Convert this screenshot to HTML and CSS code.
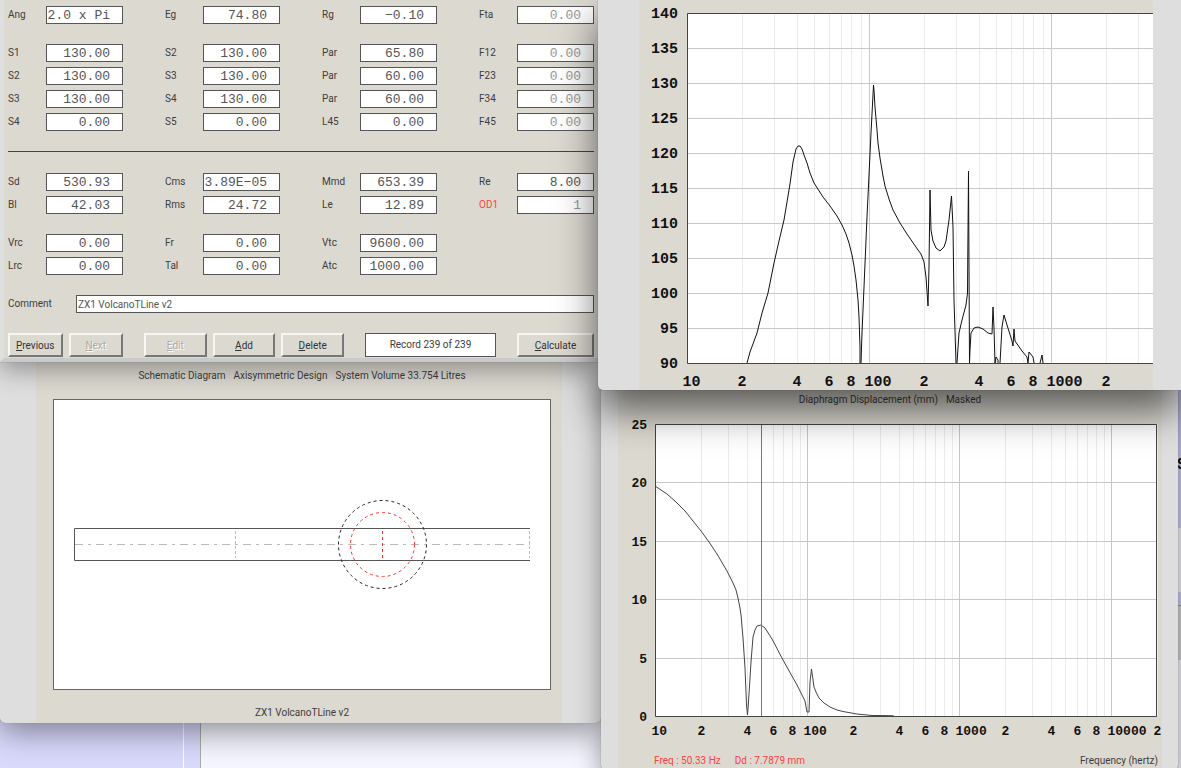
FILE: index.html
```html
<!DOCTYPE html>
<html lang="en">
<head>
    <meta charset="UTF-8">
    <meta name="viewport" content="width=device-width, initial-scale=1.0">
    <title>ZX1 VolcanoTLine v2</title>
    <link rel="stylesheet" href="styles.css">
</head>
<body>
    <div class="desktop">
        <!-- Web page behind the windows -->
        <div class="backdrop">
            <div class="backdrop-nav"></div>
            <div class="backdrop-gutter"></div>
            <div class="backdrop-page"></div>
            <div class="backdrop-side">
                <div class="side-block side-heading">S</div>
                <div class="side-block side-light"></div>
                <div class="side-block side-bar"></div>
                <div class="side-block side-grey"></div>
                <div class="side-block side-rest"></div>
            </div>
        </div>

        <!-- Schematic diagram -->
        <section class="window schematic-window">
            <div class="panel schematic-panel">
                <h2 class="caption"><span>Schematic Diagram</span><span>Axisymmetric Design</span><span>System Volume 33.754 Litres</span></h2>
                <svg class="schematic" viewBox="53 399 498 291">
                    <rect class="frame" x="53.5" y="399.5" width="497" height="290"/>
                    <path class="tube" d="M530 528.5H74.5V560.5H530"/>
                    <path class="axis" d="M75 544.5H530"/>
                    <path class="section" d="M235.5 531V558M529.5 531V558"/>
                    <path class="driver" d="M382.5 531V558"/>
                    <circle class="driver" cx="382.5" cy="544.5" r="32"/>
                    <circle class="magnet" cx="382.5" cy="544.5" r="44"/>
                </svg>
                <p class="caption">ZX1 VolcanoTLine v2</p>
            </div>
        </section>

        <!-- Input parameters -->
        <form class="window form-window">
            <div class="field-grid">
                <div class="field"><label for="ang">Ang</label><input id="ang" value="2.0 x Pi"></div>
                <div class="field"><label for="eg">Eg</label><input id="eg" value="74.80"></div>
                <div class="field"><label for="rg">Rg</label><input id="rg" value="−0.10"></div>
                <div class="field"><label for="fta">Fta</label><input id="fta" value="0.00" disabled></div>
            </div>
            <div class="field-grid">
                <div class="field"><label for="s1">S1</label><input id="s1" value="130.00"></div>
                <div class="field"><label for="s2a">S2</label><input id="s2a" value="130.00"></div>
                <div class="field"><label for="par1">Par</label><input id="par1" value="65.80"></div>
                <div class="field"><label for="f12">F12</label><input id="f12" value="0.00" disabled></div>

                <div class="field"><label for="s2">S2</label><input id="s2" value="130.00"></div>
                <div class="field"><label for="s3a">S3</label><input id="s3a" value="130.00"></div>
                <div class="field"><label for="par2">Par</label><input id="par2" value="60.00"></div>
                <div class="field"><label for="f23">F23</label><input id="f23" value="0.00" disabled></div>

                <div class="field"><label for="s3">S3</label><input id="s3" value="130.00"></div>
                <div class="field"><label for="s4a">S4</label><input id="s4a" value="130.00"></div>
                <div class="field"><label for="par3">Par</label><input id="par3" value="60.00"></div>
                <div class="field"><label for="f34">F34</label><input id="f34" value="0.00" disabled></div>

                <div class="field"><label for="s4">S4</label><input id="s4" value="0.00"></div>
                <div class="field"><label for="s5">S5</label><input id="s5" value="0.00"></div>
                <div class="field"><label for="l45">L45</label><input id="l45" value="0.00"></div>
                <div class="field"><label for="f45">F45</label><input id="f45" value="0.00" disabled></div>
            </div>
            <hr class="rule">
            <div class="field-grid">
                <div class="field"><label for="sd">Sd</label><input id="sd" value="530.93"></div>
                <div class="field"><label for="cms">Cms</label><input id="cms" value="3.89E−05"></div>
                <div class="field"><label for="mmd">Mmd</label><input id="mmd" value="653.39"></div>
                <div class="field"><label for="re">Re</label><input id="re" value="8.00"></div>

                <div class="field"><label for="bl">Bl</label><input id="bl" value="42.03"></div>
                <div class="field"><label for="rms">Rms</label><input id="rms" value="24.72"></div>
                <div class="field"><label for="le">Le</label><input id="le" value="12.89"></div>
                <div class="field"><label class="red" for="od1">OD1</label><input id="od1" value="1" disabled></div>
            </div>
            <div class="field-grid">
                <div class="field"><label for="vrc">Vrc</label><input id="vrc" value="0.00"></div>
                <div class="field"><label for="fr">Fr</label><input id="fr" value="0.00"></div>
                <div class="field"><label for="vtc">Vtc</label><input id="vtc" value="9600.00"></div>
                <div></div>

                <div class="field"><label for="lrc">Lrc</label><input id="lrc" value="0.00"></div>
                <div class="field"><label for="tal">Tal</label><input id="tal" value="0.00"></div>
                <div class="field"><label for="atc">Atc</label><input id="atc" value="1000.00"></div>
                <div></div>
            </div>
            <div class="field comment-field">
                <label for="comment">Comment</label>
                <input id="comment" value="ZX1 VolcanoTLine v2">
            </div>
            <div class="toolbar">
                <div class="button-group nav-buttons">
                    <button type="button"><u>P</u>revious</button>
                    <button type="button" disabled><u>N</u>ext</button>
                </div>
                <div class="button-group edit-buttons">
                    <button type="button" disabled><u>E</u>dit</button>
                    <button type="button"><u>A</u>dd</button>
                    <button type="button"><u>D</u>elete</button>
                </div>
                <output class="record">Record 239 of 239</output>
                <div class="button-group calc-buttons">
                    <button type="button"><u>C</u>alculate</button>
                </div>
            </div>
        </form>

        <!-- Diaphragm displacement -->
        <section class="window displacement-window">
            <div class="panel displacement-panel">
                <h2 class="caption"><span>Diaphragm Displacement (mm)</span><span>Masked</span></h2>
                <svg class="chart chart-small" id="displacement" viewBox="618 408 544 344"></svg>
                <div class="chart-footer">
                    <p class="red"><span>Freq : 50.33 Hz</span><span>Dd : 7.7879 mm</span></p>
                    <p>Frequency (hertz)</p>
                </div>
            </div>
        </section>

        <!-- Acoustical power -->
        <section class="window spl-window">
            <div class="panel spl-panel">
                <svg class="chart" id="spl" viewBox="639 0 514 390"></svg>
            </div>
        </section>
    </div>

    <script src="charts.js"></script>
</body>
</html>
```

FILE: styles.css
```css
* {
    margin: 0;
    padding: 0;
    box-sizing: border-box;
}

body {
    font-family: Roboto, 'Liberation Sans', Arial, sans-serif;
    font-size: 10px;
    line-height: 18px;
    color: #3c3c3c;
}

.desktop {
    position: relative;
    min-height: 100vh;
    overflow: hidden;
}

.red {
    color: #ff4040;
}

/* Page behind the windows */
.backdrop {
    display: flex;
    height: 100vh;
    background: #f5f5ff;
}

.backdrop-nav {
    width: 184px;
    background: #d9d9fc;
    border-right: 1px solid #fff;
}

.backdrop-gutter {
    width: 17px;
    background: #d9d9fc;
    border-right: 1px solid #aaa;
}

.backdrop-page {
    flex: 1;
}

.backdrop-side {
    display: flex;
    flex-direction: column;
    width: 4px;
    overflow: hidden;
}

.side-heading {
    height: 528px;
    padding-top: 455px;
    background: #c8c8f4;
    color: #000;
    font-size: 14px;
    font-weight: bold;
}

.side-light {
    height: 64px;
    background: #eeeef6;
}

.side-bar {
    height: 14px;
    background: #c8c8f4;
    border-bottom: 1px solid #999;
}

.side-grey {
    height: 54px;
    background: #cfcfcf;
}

.side-rest {
    flex: 1;
    background: #f0f0fa;
}

/* Windows */
.window {
    position: absolute;
    background: #dedede;
}

.panel {
    background: #dcd9d1;
}

.caption {
    display: flex;
    justify-content: center;
    gap: 8px;
    font-size: 10px;
    font-weight: normal;
}

.form-window {
    top: 0;
    left: 0;
    right: 583px;
    padding: 6px 4px 1px;
    background: #dcd9d1;
    border-left: 4px solid #dedfdf;
    border-bottom: 4px solid #cacaca;
    box-shadow: 0 0 1px #777, 0 8px 24px rgba(0, 0, 0, 0.35);
}

.schematic-window {
    top: 340px;
    left: 0;
    right: 580px;
    padding: 0 39px 0 36px;
    border-radius: 0 0 5px 5px;
    box-shadow: 0 0 1px #666, 0 10px 30px rgba(0, 0, 0, 0.4);
}

.schematic-panel {
    padding: 27px 11px 1px 17px;
}

.displacement-window {
    top: 375px;
    right: 3px;
    width: 577px;
    padding: 0 16px 0 17px;
    border-radius: 0 0 5px 5px;
    box-shadow: 0 0 1px #666, 0 10px 26px rgba(0, 0, 0, 0.4);
}

.displacement-panel {
    padding-top: 16px;
}

.displacement-panel .chart {
    margin-top: -1px;
}

.spl-window {
    top: 0;
    right: 0;
    width: 583px;
    padding: 0 28px 0 41px;
    border-radius: 0 0 0 5px;
    box-shadow: 0 0 1px #444, 0 20px 40px rgba(0, 0, 0, 0.6);
}

/* Parameter form */
.field-grid {
    display: grid;
    grid-template-columns: repeat(4, minmax(0, 1fr));
    gap: 5px 42px;
    margin-bottom: 20px;
}

.field {
    display: flex;
    align-items: center;
}

.field label {
    width: 38px;
}

.field input {
    flex: 1;
    min-width: 0;
    height: 18px;
    padding: 0 12px 0 0;
    border: 1px solid #555;
    background: #fff;
    color: #555;
    font-family: 'Liberation Mono', 'Courier New', monospace;
    font-size: 13px;
    text-align: right;
    outline: none;
}

.field input:disabled {
    color: #999;
}

.rule {
    margin-bottom: 21px;
    border: 0;
    border-top: 1px solid #444;
}

.field.comment-field {
    margin-bottom: 20px;
}

.comment-field label {
    width: 68px;
}

.field.comment-field input {
    padding: 0 1px;
    font-family: inherit;
    font-size: 10px;
    text-align: left;
}

.toolbar {
    display: flex;
    gap: 21px;
}

.button-group {
    display: flex;
    gap: 6px;
}

.nav-buttons {
    width: 115px;
}

.edit-buttons {
    width: 200px;
}

.calc-buttons {
    width: 77px;
}

.button-group button {
    flex: 1 1 0;
    height: 24px;
    background: #dcd9d1;
    border: 2px solid;
    border-color: #f6f6f4 #777 #777 #f6f6f4;
    color: #333;
    font-family: inherit;
    font-size: 10px;
}

.button-group button:disabled {
    color: #aaa;
    text-shadow: 1px 1px 0 #fff;
}

.record {
    flex: 1;
    height: 24px;
    border: 1px solid #555;
    background: #fff;
    line-height: 22px;
    text-align: center;
}

/* Schematic drawing */
.schematic {
    display: block;
    width: 100%;
    margin: 14px 0;
    fill: none;
}

.frame {
    fill: #fff;
    stroke: #666;
}

.tube {
    stroke: #555;
}

.axis {
    stroke: #bbb;
    stroke-dasharray: 8 5 3 5;
}

.section {
    stroke: #bbb;
    stroke-dasharray: 3 2;
}

.driver {
    stroke: #ff3030;
    stroke-dasharray: 3 3;
}

.magnet {
    stroke: #222;
    stroke-dasharray: 3 3;
}

/* Charts */
.chart {
    display: block;
    width: 100%;
    font-family: 'Liberation Mono', 'Courier New', monospace;
    font-size: 15px;
    font-weight: bold;
}

.chart-small {
    font-size: 13px;
}

.chart text {
    fill: #111;
}

.chart .value-label {
    text-anchor: end;
}

.plot {
    fill: #fff;
}

.grid-minor {
    stroke: #ebebeb;
}

.grid-major {
    stroke: #c8c8c8;
}

.plot-border {
    fill: none;
    stroke: #444;
}

.curve {
    fill: none;
    stroke: #111;
}

.chart-small .curve {
    stroke: #444;
}

.chart .marker {
    fill: #ff4040;
}

.chart-footer {
    display: flex;
    justify-content: space-between;
    padding: 0 4px 0 36px;
}

.chart-footer span + span {
    margin-left: 14px;
}
```

FILE: charts.js
```js
const SVG_NS = 'http://www.w3.org/2000/svg';

function add(svg, tag, attrs, text) {
    const el = document.createElementNS(SVG_NS, tag);
    for (const key in attrs) {
        el.setAttribute(key, attrs[key]);
    }
    if (text !== undefined) {
        el.textContent = text;
    }
    svg.appendChild(el);
}

// Log frequency axis across, linear values up
function drawChart(id, c) {
    const svg = document.getElementById(id);
    const xOf = hz => c.left + Math.log10(hz / 10) * c.decade;
    const snap = v => Math.round(v) + 0.5;
    const width = c.right - c.left;
    const height = c.bottom - c.top;
    const rows = c.values.length - 1;

    add(svg, 'rect', { class: 'plot', x: c.left, y: c.top, width: width, height: height });

    // Vertical lines and frequency labels
    for (let base = 10; base <= c.maxHz; base *= 10) {
        for (let n = 1; n < 10 && base * n <= c.maxHz; n++) {
            const x = snap(xOf(base * n));
            add(svg, 'path', { class: n === 1 ? 'grid-major' : 'grid-minor', d: `M${x} ${c.top}V${c.bottom}` });
            if ([1, 2, 4, 6, 8].includes(n) && base * n <= c.maxLabel) {
                add(svg, 'text', { x: x - c.shift, y: c.labelY }, n === 1 ? base : n);
            }
        }
    }

    // Horizontal lines and value labels
    c.values.forEach((value, i) => {
        const y = snap(c.top + height * i / rows);
        add(svg, 'path', { class: 'grid-major', d: `M${c.left} ${y}H${c.right}` });
        add(svg, 'text', { class: 'value-label', x: c.left - c.valueGap, y: y + 4 }, value);
    });

    add(svg, 'path', { class: 'plot-border', d: c.border });
    c.curves.forEach(points => add(svg, 'polyline', { class: 'curve', points: points }));
    if (c.marker) {
        add(svg, 'rect', { class: 'marker', x: Math.floor(xOf(c.marker)), y: c.top + 1, width: 1, height: height - 1 });
    }
}

drawChart('spl', {
    left: 687, right: 1153, top: 13, bottom: 363, decade: 182,
    maxHz: 3000, maxLabel: 2000, shift: 5, labelY: 386, valueGap: 9,
    values: [140, 135, 130, 125, 120, 115, 110, 105, 100, 95, 90],
    border: 'M1153 13.5H687.5V363.5H1153',
    curves: [
        '747,363 750,352 757,333 762,313 768,293 774,263 779,241 784,220 787,202 790,184 793,162 796,149 798,146 800,146 802,149 804,155 807,163 810,173 814,183 823,197 830,206 837,216 842,225 846,234 849,243 852,255 854,266 856,280 858,300 859,317 860,347 860,363',
        '861,363 862,333 864,287 867,217 871,133 873.5,85 874,90 875,107 877,130 878,143 880,158 883,176 885,186 889,199 893,210 900,223 907,234 918,250 921,254 924,262 926,277 928,306 929,267 930,190 931,230 933,241 936,248 940,251 944,247 946,241 949,220 951.5,196 953,227 954,300 956,363',
        '957,363 959,333 962,320 966,305 967.5,293 968.5,171 969,267 969.5,363 970,350 971,333 974,328 978,327 983,329 988,333 992,334 993,307 994,328 995,363 996,357 998,360 998,363',
        '1000,363 1002,327 1004,315 1007,325 1012,341 1013,346 1014,329 1015,341 1022,351 1027,357 1028,363 1029,352 1033,357 1034,363',
        '1040,363 1042,355 1043,363'
    ]
});

drawChart('displacement', {
    left: 655, right: 1157, top: 424, bottom: 716, decade: 152,
    maxHz: 20000, maxLabel: 20000, shift: 4, labelY: 735, valueGap: 8,
    values: [25, 20, 15, 10, 5, 0],
    border: 'M655.5 424.5H1156.5V716.5H655.5Z',
    marker: 50.33,
    curves: [
        '655,486 667,494 676,502 685,511 693,521 701,531 709,542 717,554 727,571 733,583 736,590 738,598 740,608 741,615 743,638 745,668 746.5,705 747.5,715 748.5,702 751,662 753,637 755,630 757,626 761,625 765,628 772,639 783,660 797,685 805,701 807,712 809,712 810,682 811.5,669 814,687 816,692 819,698 824,703 830,707 837,710 843,711.5 857,714 872,715.5 893,716',
        '871,715.5 894,716'
    ]
});
```
